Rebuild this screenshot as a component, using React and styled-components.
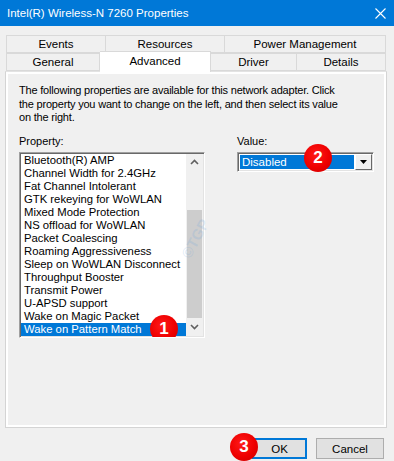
import React from "react"
import styled, { createGlobalStyle } from "styled-components"

const GlobalStyle = createGlobalStyle`
  html, body {
    margin: 0;
    padding: 0;
    background: #f0f0f0;
  }
  body {
    font-family: "Liberation Sans", Arial, sans-serif;
    font-size: 11px;
    color: #000;
  }
`

const Window = styled.div`
  width: 394px;
  height: 461px;
  background: #f0f0f0;
  display: flex;
  flex-direction: column;
  overflow: hidden;
  position: relative;
`

const TitleBar = styled.div`
  height: 26px;
  background: #0078d7;
  color: #fff;
  display: flex;
  align-items: center;
  justify-content: space-between;
  padding: 0 8px 0 7px;
  font-size: 11.5px;
`

const Body = styled.div`
  display: flex;
  flex-direction: column;
  padding: 9px 7px 0 5px;
`

const TabRow = styled.div`
  display: flex;
  height: 18px;
  padding-left: 1px;
  align-items: flex-end;
`

const Tab = styled.div`
  box-sizing: border-box;
  width: ${(p) => p.$w}px;
  height: ${(p) => (p.$active ? 21 : 18)}px;
  margin-bottom: ${(p) => (p.$active ? -1 : 0)}px;
  background: ${(p) => (p.$active ? "#fff" : "#f0f0f0")};
  border: 1px solid #d9d9d9;
  border-bottom: ${(p) => (p.$active ? "none" : "1px solid #d9d9d9")};
  border-left: ${(p) => (p.$first ? "1px solid #d9d9d9" : "none")};
  display: flex;
  align-items: center;
  justify-content: center;
  font-size: 11.5px;
  padding-bottom: ${(p) => (p.$active ? 3 : 0)}px;
  position: relative;
  z-index: ${(p) => (p.$active ? 2 : 1)};
`

const Panel = styled.div`
  box-sizing: border-box;
  height: 357px;
  border: 1px solid #d4d4d4;
  border-top-color: #e3e3e3;
  box-shadow: inset 1px 1px #fff, inset 2px 2px #fff, inset -1px -1px #fff, inset -2px -2px #fff;
  padding: 12px 12px 0 13px;
  display: flex;
  flex-direction: column;
  position: relative;
`

const Description = styled.p`
  margin: 0;
  font-size: 11px;
  line-height: 13.5px;
  letter-spacing: -0.2px;
  white-space: nowrap;
`

const Columns = styled.div`
  display: flex;
  margin-top: 10px;
`

const Column = styled.div`
  display: flex;
  flex-direction: column;
  margin-left: ${(p) => p.$ml || 0}px;
`

const Label = styled.div`
  font-size: 11px;
  line-height: 13px;
  height: 13px;
  margin-bottom: 4px;
`

const ListBox = styled.div`
  box-sizing: border-box;
  width: 186px;
  height: 186px;
  background: #fff;
  border: 1px solid;
  border-color: #a0a0a0 #fff #fff #a0a0a0;
  box-shadow: inset 1px 1px #696969, inset -1px -1px #e3e3e3;
  padding: 1px;
  display: flex;
  overflow: hidden;
`

const Items = styled.div`
  flex: 1;
  display: flex;
  flex-direction: column;
`

const Item = styled.div`
  height: 13px;
  line-height: 13px;
  font-size: 11.3px;
  padding-left: 3px;
  white-space: nowrap;
  position: relative;
  background: ${(p) => (p.$selected ? "#0078d7" : "transparent")};
  color: ${(p) => (p.$selected ? "#fff" : "#000")};
`

const ScrollBar = styled.div`
  width: 17px;
  background: #f0f0f0;
  display: flex;
  flex-direction: column;
`

const ScrollArrow = styled.div`
  height: 17px;
  display: flex;
  align-items: center;
  justify-content: center;
`

const Track = styled.div`
  flex: 1;
  display: flex;
  flex-direction: column;
  justify-content: flex-end;
  padding-bottom: 1px;
`

const Thumb = styled.div`
  height: 108px;
  margin: 0 1px;
  background: #cdcdcd;
`

const Combo = styled.div`
  box-sizing: border-box;
  width: 137px;
  height: 20px;
  background: #fff;
  border: 1px solid;
  border-color: #a0a0a0 #fff #fff #a0a0a0;
  box-shadow: inset 1px 1px #696969, inset -1px -1px #e3e3e3;
  padding: 2px;
  display: flex;
  position: relative;
`

const ComboValue = styled.div`
  flex: 1;
  background: #0078d7;
  color: #fff;
  font-size: 11.5px;
  line-height: 14px;
  padding-left: 2px;
`

const ComboButton = styled.div`
  box-sizing: border-box;
  width: 17px;
  margin: -1px -1px -1px 1px;
  background: #f0f0f0;
  border: 1px solid;
  border-color: #fff #696969 #696969 #fff;
  display: flex;
  align-items: center;
  justify-content: center;
`

const Footer = styled.div`
  display: flex;
  justify-content: flex-end;
  gap: 9px;
  padding: 10px 3px 0 0;
`

const Button = styled.div`
  box-sizing: border-box;
  width: ${(p) => p.$w}px;
  height: 21px;
  background: #e1e1e1;
  border: ${(p) => (p.$default ? "2px solid #0078d7" : "1px solid #adadad")};
  display: flex;
  align-items: center;
  justify-content: center;
  font-size: 11.5px;
  position: relative;
`

const Badge = styled.div`
  position: absolute;
  width: 28px;
  height: 28px;
  border-radius: 50%;
  background: radial-gradient(circle at 42% 38%, #ff1a1a 0%, #ee0000 55%, #c80000 100%);
  color: #fff;
  font-weight: bold;
  font-size: 17px;
  display: flex;
  align-items: center;
  justify-content: center;
  left: ${(p) => p.$x}px;
  top: ${(p) => p.$y}px;
  z-index: 5;
`

const Watermark = styled.div`
  position: absolute;
  left: 168px;
  top: 158px;
  transform: rotate(-62deg);
  font-size: 15px;
  font-weight: bold;
  color: rgba(120, 170, 220, 0.22);
  pointer-events: none;
`

const Chevron = ({ up }) => (
  <svg width="9" height="6" viewBox="0 0 9 6">
    <polyline
      points={up ? "1,5 4.5,1.5 8,5" : "1,1 4.5,4.5 8,1"}
      fill="none"
      stroke="#606060"
      strokeWidth="1.6"
    />
  </svg>
)

const properties = [
  "Bluetooth(R) AMP",
  "Channel Width for 2.4GHz",
  "Fat Channel Intolerant",
  "GTK rekeying for WoWLAN",
  "Mixed Mode Protection",
  "NS offload for WoWLAN",
  "Packet Coalescing",
  "Roaming Aggressiveness",
  "Sleep on WoWLAN Disconnect",
  "Throughput Booster",
  "Transmit Power",
  "U-APSD support",
  "Wake on Magic Packet",
  "Wake on Pattern Match",
]

const App = () => {
  return (
    <Window>
      <GlobalStyle />
      <TitleBar>
        <span>Intel(R) Wireless-N 7260 Properties</span>
        <svg width="11" height="11" viewBox="0 0 11 11">
          <path d="M0.5 0.5 L10.5 10.5 M10.5 0.5 L0.5 10.5" stroke="#fff" strokeWidth="1.1" />
        </svg>
      </TitleBar>
      <Body>
        <TabRow>
          <Tab $w={100} $first>Events</Tab>
          <Tab $w={119}>Resources</Tab>
          <Tab $w={161}>Power Management</Tab>
        </TabRow>
        <TabRow>
          <Tab $w={94} $first>General</Tab>
          <Tab $w={111} $active>Advanced</Tab>
          <Tab $w={86}>Driver</Tab>
          <Tab $w={89}>Details</Tab>
        </TabRow>
        <Panel>
          <Description>
            The following properties are available for this network adapter. Click
            <br />
            the property you want to change on the left, and then select its value
            <br />
            on the right.
          </Description>
          <Columns>
            <Column>
              <Label>Property:</Label>
              <ListBox>
                <Items>
                  {properties.map((name, i) => (
                    <Item key={name} $selected={i === properties.length - 1}>
                      {name}
                      {i === properties.length - 1 && (
                        <Badge $x={129} $y={-8}>1</Badge>
                      )}
                    </Item>
                  ))}
                </Items>
                <ScrollBar>
                  <ScrollArrow>
                    <Chevron up />
                  </ScrollArrow>
                  <Track>
                    <Thumb />
                  </Track>
                  <ScrollArrow>
                    <Chevron />
                  </ScrollArrow>
                </ScrollBar>
              </ListBox>
            </Column>
            <Column $ml={32}>
              <Label>Value:</Label>
              <Combo>
                <ComboValue>Disabled</ComboValue>
                <ComboButton>
                  <svg width="7" height="4" viewBox="0 0 7 4">
                    <polygon points="0,0 7,0 3.5,4" fill="#000" />
                  </svg>
                </ComboButton>
                <Badge $x={66} $y={-9}>2</Badge>
              </Combo>
            </Column>
          </Columns>
          <Watermark>©TGP</Watermark>
        </Panel>
        <Footer>
          <Button $w={55} $default>
            OK
            <Badge $x={-24} $y={-7}>3</Badge>
          </Button>
          <Button $w={68}>Cancel</Button>
        </Footer>
      </Body>
    </Window>
  )
}

export default App
